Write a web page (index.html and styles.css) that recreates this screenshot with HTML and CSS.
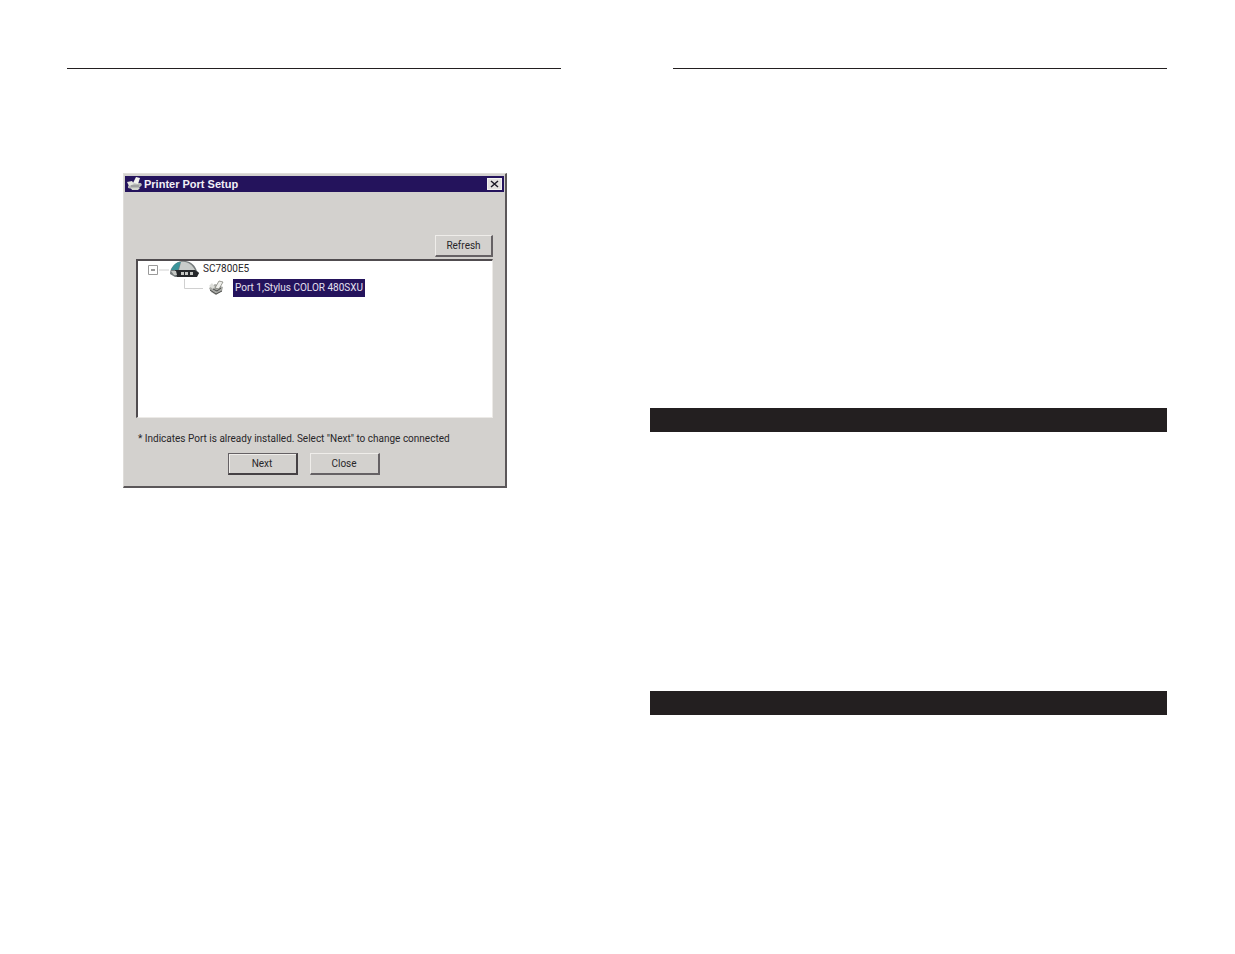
FILE: index.html
```
<!DOCTYPE html>
<html lang="en">
<head>
    <meta charset="UTF-8">
    <meta name="viewport" content="width=device-width, initial-scale=1.0">
    <title>Printer Port Setup</title>
    <link rel="stylesheet" href="styles.css">
</head>
<body>
    <div class="spread">
        <!-- Left page -->
        <section class="page">
            <div class="dialog" role="dialog" aria-labelledby="dialogTitle">
                <div class="title-bar">
                    <svg class="title-icon" width="16" height="14" viewBox="0 0 16 14" aria-hidden="true">
                        <path d="M1 9l4-3h9l1 2-3 3-7 1-4-1z" fill="#b9bbb8"/>
                        <path d="M6 6l3-6 4 1-2 6z" fill="#f4f4f0"/>
                        <path d="M0 5l5-1 2 3-5 2z" fill="#e4e5df"/>
                        <path d="M4 9h8" stroke="#85858c" fill="none"/>
                        <path d="M4 11h9l-2 2H5z" fill="#d4d6d0"/>
                    </svg>
                    <span class="title-text" id="dialogTitle">Printer Port Setup</span>
                    <button class="close-button" aria-label="Close window">
                        <svg width="9" height="8" viewBox="0 0 9 8" aria-hidden="true">
                            <path d="M1 1l7 6M8 1L1 7" stroke="#1b1926" stroke-width="1.500"/>
                        </svg>
                    </button>
                </div>

                <div class="dialog-body">
                    <button class="button refresh">Refresh</button>

                    <!-- Device tree -->
                    <ul class="tree">
                        <li>
                            <div class="tree-row">
                                <svg width="22" height="16" viewBox="0 0 22 16" aria-hidden="true">
                                    <path d="M.5 4.500h9v9h-9z" fill="#fff" stroke="#9a9a9a"/>
                                    <path d="M3 9h4" stroke="#333"/>
                                    <path d="M11 9h10" stroke="#d0d0d0"/>
                                </svg>
                                <svg width="30" height="16" viewBox="0 0 30 16" aria-hidden="true">
                                    <path d="M0 13C0 7 5 1 12 0c8-1 13 4 15 10l2 2-3 4H5z" fill="#777d7e"/>
                                    <path d="M1 9C3 4 6 1 11 1L8 9z" fill="#3b9399"/>
                                    <path d="M11 1c7-1 11 3 14 8L9 9z" fill="#c8ccca"/>
                                    <path d="M5 9h20l4 3-2 4H7z" fill="#26282b"/>
                                    <path d="M1 10h5l1 4H4zM11 11h3v3h-3zM15 11h3v3h-3zM20 11h3v3h-3z" fill="#c5c7c4"/>
                                </svg>
                                <span class="device">SC7800E5</span>
                            </div>
                            <ul class="ports">
                                <li class="tree-row">
                                    <svg width="20" height="18" viewBox="0 0 20 18" aria-hidden="true">
                                        <path d="M.5 0v9.500H19" fill="none" stroke="#d0d0d0"/>
                                    </svg>
                                    <svg class="port-icon" width="16" height="16" viewBox="0 0 16 16" aria-hidden="true">
                                        <path d="M1 8l6-4 8 3-1 4-6 4-5-3z" fill="#a8a9a5"/>
                                        <path d="M7 8l4-7 4 1-4 7z" fill="#efefec" stroke="#77786f" stroke-width=".7"/>
                                        <path d="M1 6l3-3 3 4-2 2z" fill="#dddeda"/>
                                        <path d="M2 10l6 4 6-3M5 9l4 2 4-3" fill="none" stroke="#4b4c4b"/>
                                    </svg>
                                    <span class="port selected">Port 1,Stylus COLOR 480SXU</span>
                                </li>
                            </ul>
                        </li>
                    </ul>

                    <p class="note">* Indicates Port is already installed. Select "Next" to change connected</p>
                    <div class="actions">
                        <button class="button default">Next</button>
                        <button class="button">Close</button>
                    </div>
                </div>
            </div>
        </section>

        <!-- Right page -->
        <section class="page">
            <div class="section-bar"></div>
            <div class="section-bar"></div>
        </section>
    </div>
</body>
</html>
```
FILE: styles.css
```
/* General Styles */
* {
    box-sizing: border-box;
}

body {
    margin: 0;
    background: #fff;
    color: #282629;
    font-family: Roboto, "Liberation Sans", Arial, sans-serif;
    font-size: 10px;
    line-height: 12px;
}

ul {
    list-style: none;
    margin: 0;
    padding: 0;
}

svg {
    display: block;
    flex: none;
}

/* Two facing pages */
.spread {
    display: grid;
    grid-template-columns: 1fr 1fr;
    gap: 112px;
    padding: 68px 68px 68px 67px;
}

.page {
    border-top: 1px solid #231f20;
}

/* Heading bars hang into the left margin */
.section-bar {
    height: 24px;
    margin: 339px 0 0 -23px;
    background: #231f20;
}

.section-bar + .section-bar {
    margin-top: 259px;
}

/* Dialog window */
.dialog {
    width: 384px;
    margin: 104px 0 0 56px;
    padding: 2px 1px 0 1px;
    background: #d3d1ce;
    border: 1px solid #dfddda;
    border-right: 2px solid #5b5759;
    border-bottom: 2px solid #5b5759;
}

.title-bar {
    display: flex;
    align-items: center;
    height: 16px;
    padding: 0 2px;
    background: #24135c;
    color: #f2f0f6;
}

.title-text {
    flex: 1;
    margin-left: 1px;
    font-family: "Liberation Sans", Arial, sans-serif;
    font-size: 11px;
    font-weight: bold;
}

.close-button {
    display: grid;
    place-items: center;
    width: 15px;
    height: 12px;
    padding: 0;
    background: #e3e1df;
    border: 1px solid #f4f3f2;
}

.dialog-body {
    display: flex;
    flex-direction: column;
    padding: 43px 11px 11px 11px;
}

/* Buttons */
.button {
    width: 70px;
    height: 22px;
    padding: 0;
    background: #d3d1ce;
    border: 1px solid #efedea;
    border-right: 2px solid #656164;
    border-bottom: 2px solid #656164;
    color: #282629;
    font: inherit;
}

.refresh {
    align-self: flex-end;
    width: 58px;
}

.default {
    border: 1px solid #656164;
    border-right: 2px solid #454144;
    border-bottom: 2px solid #454144;
    box-shadow: inset 1px 1px #efedea;
}

/* Device tree */
.tree {
    height: 159px;
    margin-top: 2px;
    padding: 0 0 0 10px;
    background: #fff;
    border: 1px solid #eceae7;
    border-top: 2px solid #504c4f;
    border-left: 2px solid #504c4f;
}

.tree-row {
    display: flex;
    align-items: center;
}

.device {
    margin-left: 3px;
}

.ports {
    margin: 2px 0 0 36px;
}

.port-icon {
    margin-left: 4px;
}

.port {
    margin-left: 9px;
    padding: 3px 2px;
    white-space: nowrap;
}

.selected {
    background: #24135c;
    color: #e4e0f0;
}

.note {
    margin: 15px 0 8px 2px;
    white-space: nowrap;
}

.actions {
    display: flex;
    justify-content: center;
    gap: 12px;
    margin-right: 22px;
}
```
